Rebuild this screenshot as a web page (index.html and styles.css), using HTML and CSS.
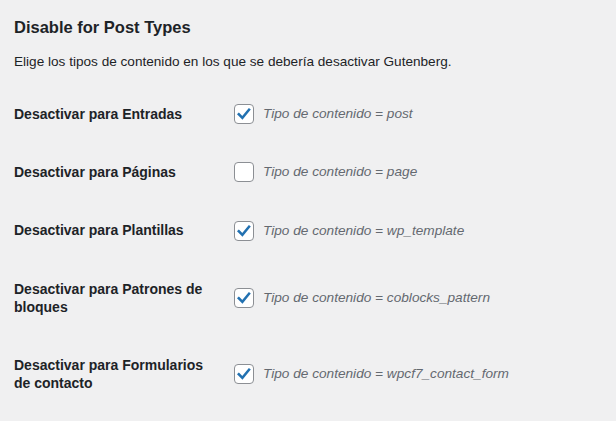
FILE: index.html
```html
<!DOCTYPE html>
<html lang="es">
<head>
<meta charset="utf-8">
<link rel="stylesheet" href="styles.css">
</head>
<body>
<div class="wrap">
  <h2 class="title">Disable for Post Types</h2>
  <p class="intro">Elige los tipos de contenido en los que se debería desactivar Gutenberg.</p>
  <table class="form-table">
    <tbody>
      <tr>
        <th>Desactivar para Entradas</th>
        <td><label class="opt"><span class="cb on"><svg viewBox="0 0 20 20"><path d="M4.2 10.2 L8.2 14.3 L15.6 5.2" /></svg></span><em>Tipo de contenido = post</em></label></td>
      </tr>
      <tr>
        <th>Desactivar para Páginas</th>
        <td><label class="opt"><span class="cb"></span><em>Tipo de contenido = page</em></label></td>
      </tr>
      <tr>
        <th>Desactivar para Plantillas</th>
        <td><label class="opt"><span class="cb on"><svg viewBox="0 0 20 20"><path d="M4.2 10.2 L8.2 14.3 L15.6 5.2" /></svg></span><em>Tipo de contenido = wp_template</em></label></td>
      </tr>
      <tr>
        <th>Desactivar para Patrones de bloques</th>
        <td><label class="opt"><span class="cb on"><svg viewBox="0 0 20 20"><path d="M4.2 10.2 L8.2 14.3 L15.6 5.2" /></svg></span><em>Tipo de contenido = coblocks_pattern</em></label></td>
      </tr>
      <tr>
        <th>Desactivar para Formularios de contacto</th>
        <td><label class="opt"><span class="cb on"><svg viewBox="0 0 20 20"><path d="M4.2 10.2 L8.2 14.3 L15.6 5.2" /></svg></span><em>Tipo de contenido = wpcf7_contact_form</em></label></td>
      </tr>
    </tbody>
  </table>
</div>
</body>
</html>
```

FILE: styles.css
```css
html, body {
  margin: 0;
  padding: 0;
  background: #f0f0f1;
}
body {
  font-family: "Liberation Sans", Arial, sans-serif;
  color: #1d2327;
  font-size: 13px;
}
.wrap {
  padding: 14px 14px 0 14px;
}
.title {
  font-size: 16.5px;
  font-weight: 600;
  margin: 1px 0 0 0;
  line-height: 24px;
}
.intro {
  font-size: 13.6px;
  margin: 13px 0 0 0;
  line-height: 20px;
}
.form-table {
  border-collapse: collapse;
  margin-top: 13px;
}
.form-table th {
  width: 200px;
  text-align: left;
  vertical-align: top;
  padding: 20px 10px 20px 0;
  font-size: 14px;
  font-weight: 600;
  line-height: 18.2px;
}
.form-table td {
  vertical-align: middle;
  padding: 0 10px;
}
.opt {
  display: flex;
  align-items: center;
  gap: 9px;
}
.cb {
  box-sizing: border-box;
  width: 20px;
  height: 20px;
  border: 1px solid #8c8f94;
  border-radius: 4px;
  background: #fff;
  display: flex;
  align-items: center;
  justify-content: center;
}
.cb svg {
  width: 18px;
  height: 18px;
}
.cb svg path {
  fill: none;
  stroke: #2271b1;
  stroke-width: 2.8;
  stroke-linecap: square;
  stroke-linejoin: miter;
}
.opt em {
  font-size: 13.65px;
  color: #646970;
  line-height: 18px;
}
```
